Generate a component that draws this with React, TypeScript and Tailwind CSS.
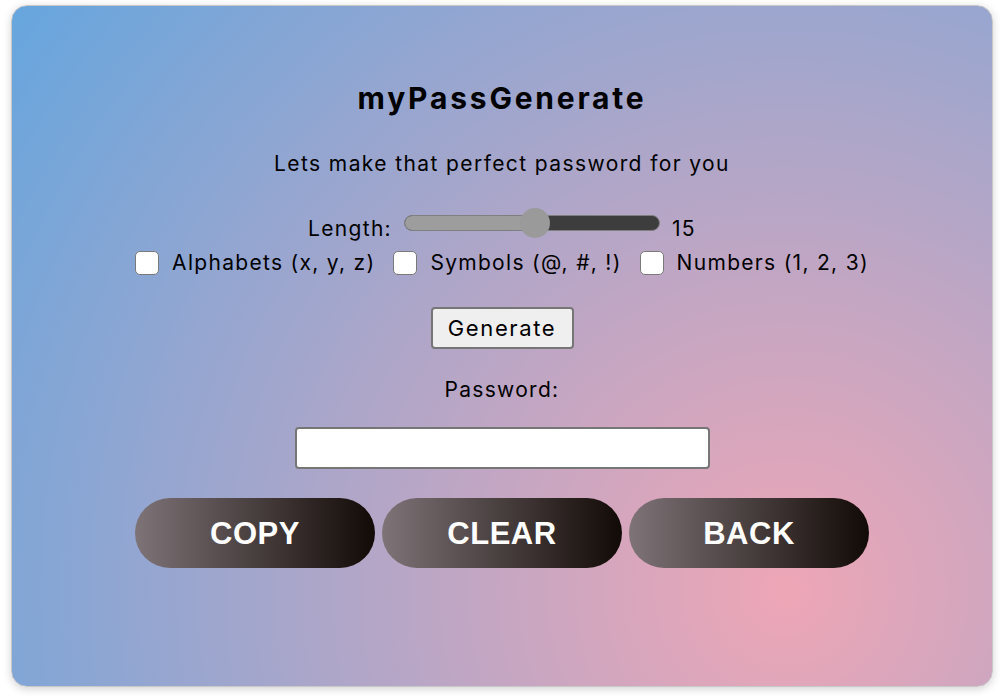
import React from "react";

function Check({ label }: { label: string }) {
  return (
    <label className="flex items-center">
      <span className="w-[24px] h-[24px] rounded-[5px] border border-[#7a7a7a] bg-white mr-[13px]" />
      <span className="mr-[18px]">{label}</span>
    </label>
  );
}

function Pill({ label }: { label: string }) {
  return (
    <button className="w-[240px] h-[70px] rounded-full bg-[linear-gradient(to_right,#7e7377,#120a06)] text-white font-bold text-[31px] leading-none tracking-[0.5px] font-['Liberation_Sans',Arial,sans-serif]">
      {label}
    </button>
  );
}

export default function App() {
  return (
    <div className="w-[1008px] h-[698px] bg-white pt-[5px] pl-[11px] font-['Inter',sans-serif] text-black">
      <div className="w-[982px] h-[682px] rounded-[16px] border border-[#c8c8c8] shadow-[0_2px_8px_rgba(0,0,0,0.18)] bg-[radial-gradient(circle_at_79%_86%,#eea6b6,#66a6de)] flex flex-col items-center">
        <h1 className="mt-[74px] text-[30px] font-bold leading-[36px] tracking-[2.8px]">myPassGenerate</h1>
        <p className="mt-[35px] text-[21px] leading-[26px] tracking-[1.4px]">Lets make that perfect password for you</p>
        <div className="mt-[30px] flex items-center text-[21px] leading-[26px] tracking-[1.3px] h-[32px]">
          <span className="mr-[12px] mt-[12px]">Length:</span>
          <div className="relative w-[256px] h-[16px] rounded-full bg-[#3d3d3d] border border-[#7f7f7f]">
            <div className="absolute left-0 top-0 h-full w-[128px] rounded-l-full bg-[#9d9d9d]" />
            <div className="absolute left-[115px] top-[-8px] w-[30px] h-[30px] rounded-full bg-[#9a9a9a]" />
          </div>
          <span className="ml-[12px] mt-[12px]">15</span>
        </div>
        <div className="mt-[11px] ml-[18px] flex items-center text-[21px] leading-[26px] tracking-[1.3px]">
          <Check label="Alphabets (x, y, z)" />
          <Check label="Symbols (@, #, !)" />
          <Check label="Numbers (1, 2, 3)" />
        </div>
        <button className="mt-[31px] w-[143px] h-[42px] bg-[#efefef] border-2 border-[#767676] rounded-[4px] text-[22px] leading-none tracking-[1.6px]">
          Generate
        </button>
        <p className="mt-[28px] text-[21px] leading-[26px] tracking-[1.3px]">Password:</p>
        <div className="mt-[24px] w-[415px] h-[42px] bg-white border-2 border-[#767676] rounded-[4px]" />
        <div className="mt-[29px] flex gap-[7px]">
          <Pill label="COPY" />
          <Pill label="CLEAR" />
          <Pill label="BACK" />
        </div>
      </div>
    </div>
  );
}
